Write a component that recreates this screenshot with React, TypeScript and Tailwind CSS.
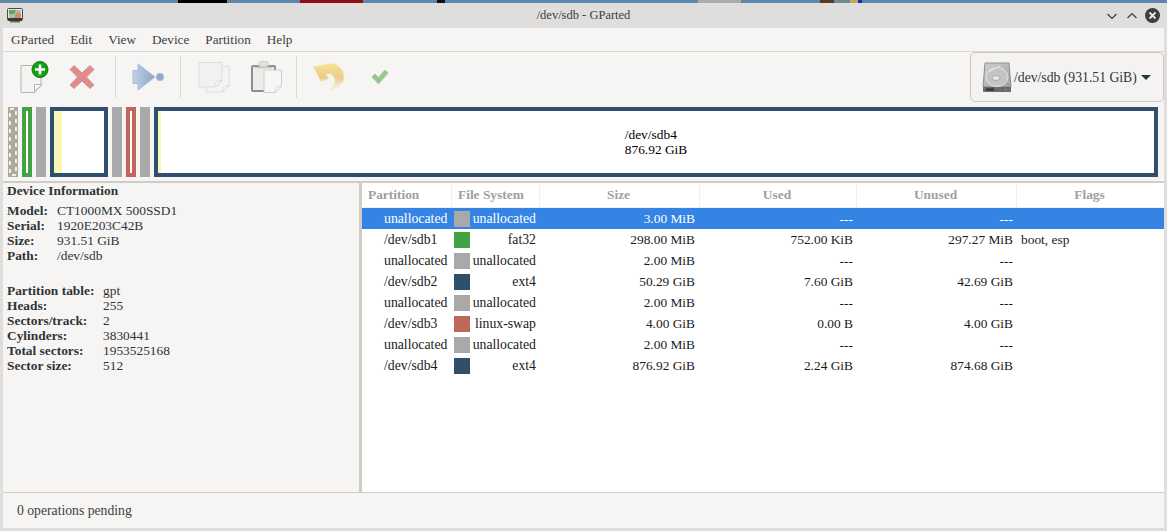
const serif = "font-['Liberation_Serif',serif]";

const info1 = [
  ["Model:", "CT1000MX 500SSD1"],
  ["Serial:", "1920E203C42B"],
  ["Size:", "931.51 GiB"],
  ["Path:", "/dev/sdb"],
];

const info2 = [
  ["Partition table:", "gpt"],
  ["Heads:", "255"],
  ["Sectors/track:", "2"],
  ["Cylinders:", "3830441"],
  ["Total sectors:", "1953525168"],
  ["Sector size:", "512"],
];

const rows = [
  ["unallocated", "#a9a9a9", "unallocated", "3.00 MiB", "---", "---", ""],
  ["/dev/sdb1", "#43a245", "fat32", "298.00 MiB", "752.00 KiB", "297.27 MiB", "boot, esp"],
  ["unallocated", "#a9a9a9", "unallocated", "2.00 MiB", "---", "---", ""],
  ["/dev/sdb2", "#304f6e", "ext4", "50.29 GiB", "7.60 GiB", "42.69 GiB", ""],
  ["unallocated", "#a9a9a9", "unallocated", "2.00 MiB", "---", "---", ""],
  ["/dev/sdb3", "#c1665a", "linux-swap", "4.00 GiB", "0.00 B", "4.00 GiB", ""],
  ["unallocated", "#a9a9a9", "unallocated", "2.00 MiB", "---", "---", ""],
  ["/dev/sdb4", "#304f6e", "ext4", "876.92 GiB", "2.24 GiB", "874.68 GiB", ""],
];

function NewIcon() {
  return (
    <svg width="32" height="32" viewBox="0 0 32 32">
      <path d="M3 4.500h20v20l-6.500 7H3z" fill="#f3f3f2" stroke="#b5b5b3" />
      <path d="M16.500 31v-7.500h7z" fill="#fbfbfa" stroke="#b5b5b3" />
      <circle cx="22" cy="8.500" r="8" fill="#12a012" stroke="#0b7d0b" />
      <path d="M22 3.500v10M17 8.500h10" stroke="#fff" strokeWidth="2.600" />
    </svg>
  );
}

function DeleteIcon() {
  return (
    <svg width="26" height="26" viewBox="0 0 26 26">
      <path
        d="M5 1.500l8 7.500 8-7.500 4 4-7.500 7.500 7.500 8-4 3.500-8-7.500-8 7.500-4-3.500 7.500-8L1 5.500z"
        fill="#e48a8a"
        stroke="#bfa0a0"
      />
    </svg>
  );
}

function ApplyIcon() {
  return (
    <svg width="34" height="28" viewBox="0 0 34 28">
      <defs>
        <linearGradient id="ap" x1="0" y1="0" x2="1" y2="0">
          <stop offset="0" stopColor="#c0d0e6" />
          <stop offset="1" stopColor="#8aa5cc" />
        </linearGradient>
      </defs>
      <path d="M6 1l17 13L6 27v-6.500H1v-13h5z" fill="url(#ap)" stroke="#a9bbd3" />
      <circle cx="28" cy="14" r="3.700" fill="#90a9cc" stroke="#a9bbd3" />
    </svg>
  );
}

function CopyIcon() {
  return (
    <svg width="32" height="32" viewBox="0 0 32 32">
      <path d="M8 5.500h23v19l-6.500 6.500H8z" fill="#f4f4f3" stroke="#dedddb" />
      <path d="M1 1.500h23v18l-7 6.500H1z" fill="#f1f1f0" stroke="#dedddb" />
      <path d="M17 26c0-4 1-6 7-6.500z" fill="#fbfbfa" stroke="#d6d5d3" />
      <path d="M24.500 31c0-4 1-6 6.500-6.500z" fill="#fbfbfa" stroke="#d6d5d3" />
    </svg>
  );
}

function PasteIcon() {
  return (
    <svg width="32" height="32" viewBox="0 0 32 32">
      <rect x="2" y="5" width="23" height="25" rx="1" fill="#ecebea" stroke="#8e8e8c" strokeWidth="2" />
      <rect x="9" y="0.500" width="9" height="5" rx="1.500" fill="#e2e1df" stroke="#cfcecc" />
      <path d="M5 6.500h17" stroke="#c9c8c6" strokeWidth="1.500" />
      <path d="M14 9h17.500v16l-6.500 6.500H14z" fill="#f6f6f5" stroke="#cfcecc" />
      <path d="M25 31.500c0-4 1-6 6.500-6.500z" fill="#fbfbfa" stroke="#d6d5d3" />
    </svg>
  );
}

function UndoIcon() {
  return (
    <svg width="32" height="32" viewBox="0 0 32 32">
      <defs>
        <linearGradient id="un" x1="0" y1="0" x2="0" y2="1">
          <stop offset="0" stopColor="#f5e28e" />
          <stop offset="0.55" stopColor="#eccb8e" />
          <stop offset="1" stopColor="#f5f4f2" />
        </linearGradient>
      </defs>
      <path
        d="M0.500 6L13 3.500C23 0 31 8 31 16c0 6-6 11-14 12 4-4 7-8 3-13-2-2.500-5-3-7-1l3 3.500-8 3z"
        fill="url(#un)"
        stroke="#f0e3a8"
        strokeWidth="0.500"
      />
    </svg>
  );
}

function CheckIcon() {
  return (
    <svg width="18" height="16" viewBox="0 0 18 16">
      <path d="M1 8l3-3 3.500 3.500L14 1l3 3-9.500 11z" fill="#93c987" stroke="#a9c9a3" />
    </svg>
  );
}

function DiskIcon() {
  return (
    <svg width="30" height="31" viewBox="0 0 30 31">
      <defs>
        <linearGradient id="dk" x1="0" y1="0" x2="1" y2="1">
          <stop offset="0" stopColor="#d0d0d0" />
          <stop offset="1" stopColor="#a0a0a0" />
        </linearGradient>
      </defs>
      <path d="M3 1h24l2 24H1z" fill="url(#dk)" stroke="#8f8f8f" />
      <ellipse cx="15" cy="15" rx="11" ry="9.500" fill="#c4c4c4" stroke="#e4e4e4" />
      <path d="M6 10l12-6" stroke="#ececec" />
      <ellipse cx="14" cy="16" rx="4" ry="2.500" fill="#e8e8e8" stroke="#a8a8a8" />
      <path d="M1 25h28v4a1 1 0 0 1-1 1H2a1 1 0 0 1-1-1z" fill="#6a6a6a" />
      <rect x="4" y="26.500" width="8" height="2" fill="#2e2e2e" />
      <rect x="23" y="27" width="1.500" height="1.500" fill="#5fae6a" />
    </svg>
  );
}

function AppIcon() {
  return (
    <svg width="16" height="15" viewBox="0 0 16 15">
      <rect x="0.500" y="0.500" width="15" height="12" rx="1" fill="#e8e8e8" stroke="#4a4a4a" />
      <rect x="2" y="2" width="12" height="8" fill="#a8c8a0" />
      <path d="M2 2h7l-2 4H2z" fill="#58a860" />
      <path d="M7 10l2-5 3-1 2 3v3z" fill="#e0836a" />
      <rect x="1" y="10" width="14" height="3" fill="#3a3a3a" />
      <rect x="3" y="13" width="10" height="1.500" fill="#6a6a6a" />
    </svg>
  );
}

function Separator() {
  return <div className="h-[42px] w-px bg-[#dcdad6]" />;
}

function Box({ w, color, children }: { w: string; color: string; children?: React.ReactNode }) {
  return (
    <div className={`${w} h-[70px] border-4 bg-white flex`} style={{ borderColor: color }}>
      {children}
    </div>
  );
}

export default function App() {
  return (
    <div className={`w-[1167px] h-[531px] overflow-hidden flex flex-col bg-[#dfdedc] text-[13.4px] leading-[15px] text-[#2e3436] ${serif}`}>
      {/* wallpaper peeking above the window */}
      <div className="h-[3px] flex shrink-0 bg-[#5f86ad]">
        <div className="w-[178px]" />
        <div className="w-[49px] bg-black" />
        <div className="w-[73px]" />
        <div className="w-[63px] bg-[#8e1010]" />
        <div className="w-[74px]" />
        <div className="w-[8px] bg-[#111]" />
        <div className="w-[253px]" />
        <div className="w-[43px] bg-[#a9adb0]" />
        <div className="w-[79px]" />
        <div className="w-[14px] bg-[#5a3a20]" />
        <div className="w-[16px] bg-[#6f8a94]" />
        <div className="w-[8px] bg-[#c4a860]" />
        <div className="w-[4px] bg-[#2030a0]" />
      </div>

      {/* title bar */}
      <div className="h-[25px] shrink-0 flex items-center pl-[7px] pr-[7px] relative">
        <AppIcon />
        <div className="absolute left-0 right-0 text-center text-[12.5px] text-[#3d3d3d]">/dev/sdb - GParted</div>
        <div className="ml-auto flex items-center gap-[6px] relative">
          <svg width="14" height="14" viewBox="0 0 14 14" fill="none" stroke="#3d3d3d" strokeWidth="1.200">
            <path d="M2.500 5l4.500 4.500L11.500 5" />
          </svg>
          <svg width="14" height="14" viewBox="0 0 14 14" fill="none" stroke="#3d3d3d" strokeWidth="1.200">
            <path d="M2.500 9L7 4.500 11.500 9" />
          </svg>
          <svg width="15" height="15" viewBox="0 0 15 15">
            <circle cx="7.500" cy="7.500" r="7.500" fill="#3d3d3d" />
            <path d="M4.500 4.500l6 6M10.500 4.500l-6 6" stroke="#e8e8e8" strokeWidth="1.800" />
          </svg>
        </div>
      </div>

      <div className="flex-1 min-h-0 ml-[3px] mr-[3px] mb-[3px] flex flex-col bg-[#f6f5f4]">
        {/* menu */}
        <div className="h-[24px] shrink-0 flex items-center border-b border-[#dcdad6] pl-[8px] gap-[16px] text-[13.2px] text-[#3d3d3d]">
          {["GParted", "Edit", "View", "Device", "Partition", "Help"].map((m) => (
            <span key={m}>{m}</span>
          ))}
        </div>

        {/* toolbar */}
        <div className="h-[49px] shrink-0 flex items-center relative">
          <div className="w-[112px] pl-[15px] flex items-center shrink-0">
            <NewIcon />
            <div className="ml-[19px]">
              <DeleteIcon />
            </div>
          </div>
          <Separator />
          <div className="w-[64px] shrink-0 pl-[16px]">
            <ApplyIcon />
          </div>
          <Separator />
          <div className="w-[115px] shrink-0 pl-[17px] flex items-center gap-[20px]">
            <CopyIcon />
            <PasteIcon />
          </div>
          <Separator />
          <div className="pl-[16px] flex items-center gap-[26px]">
            <UndoIcon />
            <CheckIcon />
          </div>
          <div className="ml-auto self-start h-[50px] w-[194px] border border-[#cdc7c2] rounded-[5px] bg-[#f4f3f1] flex items-center pl-[11px] text-[#3d3d3d]">
            <DiskIcon />
            <span className="ml-[2px] text-[13.7px] text-[#2e3436]">/dev/sdb (931.51 GiB)</span>
            <svg className="ml-[4px]" width="10" height="5" viewBox="0 0 10 5">
              <path d="M0 0h10L5 5z" fill="#2e3436" />
            </svg>
          </div>
        </div>

        {/* partition map */}
        <div className="h-[80px] shrink-0 flex pl-[5px] pt-[6px] gap-[4px]">
          <svg width="10" height="70" viewBox="0 0 10 70">
            <rect width="10" height="70" fill="#a9a9a9" />
            <rect x="2" y="2" width="6" height="66" fill="none" stroke="#f8f7b8" strokeWidth="2" strokeDasharray="4 4" />
          </svg>
          <Box w="w-[10px]" color="#43a245" />
          <div className="w-[10px] h-[70px] bg-[#a9a9a9]" />
          <Box w="w-[58px]" color="#304f6e">
            <div className="w-[8px] bg-[#f8f7b8]" />
          </Box>
          <div className="w-[10px] h-[70px] bg-[#a9a9a9]" />
          <Box w="w-[10px]" color="#c1665a" />
          <div className="w-[10px] h-[70px] bg-[#a9a9a9]" />
          <Box w="w-[1004px]" color="#304f6e">
            <div className="w-[3px] bg-[#f8f7b8]" />
            <div className="flex-1 flex items-center justify-center text-black pr-[3px]">
              <div>
                <div>/dev/sdb4</div>
                <div>876.92 GiB</div>
              </div>
            </div>
          </Box>
        </div>

        {/* device info + partition list */}
        <div className="flex-1 min-h-0 flex border-t-2 border-b border-[#d0ccc6]">
          <div className="w-[356px] shrink-0 pl-[4px] text-[#2e3436]">
            <div className="font-bold h-[16px] mb-[4px]">Device Information</div>
            {info1.map(([k, v]) => (
              <div key={k} className="flex h-[15px]">
                <span className="w-[50px] font-bold">{k}</span>
                <span>{v}</span>
              </div>
            ))}
            <div className="h-[20px]" />
            {info2.map(([k, v]) => (
              <div key={k} className="flex h-[15px]">
                <span className="w-[96px] font-bold">{k}</span>
                <span>{v}</span>
              </div>
            ))}
          </div>
          <div className="w-[3px] shrink-0 bg-[#d0ccc6]" />
          <div className="flex-1 bg-white">
            <div className="h-[25px] flex items-center font-bold text-[#a0a0a0] border-b border-[#f0efed]">
              <div className="w-[90px] pl-[6px] pb-[2px] border-r border-[#efeeec] h-full flex items-center">Partition</div>
              <div className="w-[88px] pl-[6px] pb-[2px] border-r border-[#efeeec] h-full flex items-center">File System</div>
              <div className="w-[160px] pb-[2px] pr-[2px] border-r border-[#efeeec] h-full flex items-center justify-center">Size</div>
              <div className="w-[157px] pb-[2px] pr-[2px] border-r border-[#efeeec] h-full flex items-center justify-center">Used</div>
              <div className="w-[160px] pb-[2px] pr-[2px] border-r border-[#efeeec] h-full flex items-center justify-center">Unused</div>
              <div className="flex-1 pb-[2px] pr-[2px] h-full flex items-center justify-center">Flags</div>
            </div>
            {rows.map((r, i) => (
              <div key={i} className={`h-[21px] flex items-center ${i === 0 ? "bg-[#3584e4] text-white" : "text-[#1a1a1a]"}`}>
                <div className="w-[89px] pl-[22px] text-[13.75px] whitespace-nowrap">{r[0]}</div>
                <div className="w-[16px] h-[16px] ml-[3px] shrink-0" style={{ backgroundColor: r[1] }} />
                <div className="w-[70px] pr-[4px] text-[13.75px] text-right whitespace-nowrap">{r[2]}</div>
                <div className="w-[159px] pr-[4px] text-right">{r[3]}</div>
                <div className="w-[157px] pr-[3px] text-right">{r[4]}</div>
                <div className="w-[160px] pr-[3px] text-right">{r[5]}</div>
                <div className="flex-1 pl-[5px]">{r[6]}</div>
              </div>
            ))}
          </div>
        </div>

        {/* status bar */}
        <div className="h-[35px] shrink-0 flex items-center pl-[14px] text-[13.7px] text-[#3d3d3d]">0 operations pending</div>
      </div>
    </div>
  );
}
